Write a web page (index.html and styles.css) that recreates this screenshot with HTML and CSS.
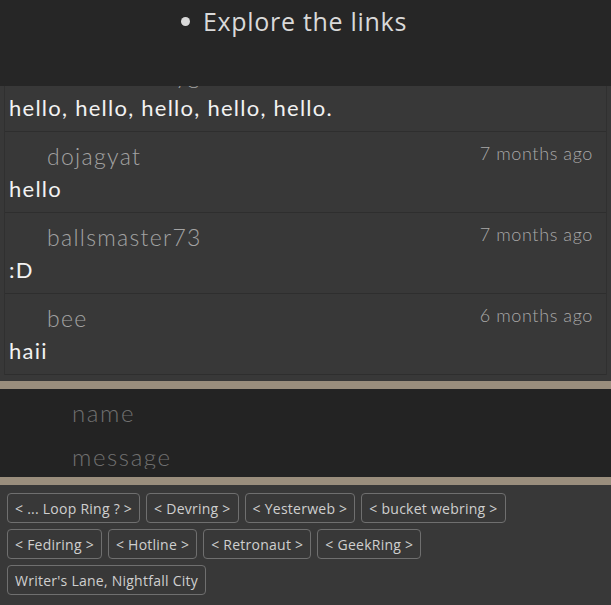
FILE: index.html
```html
<!DOCTYPE html>
<html lang="en">
<head>
<meta charset="utf-8">
<title>Guestbook</title>
<link rel="stylesheet" href="styles.css">
</head>
<body>
<header class="topbar">
  <ul class="nav-list">
    <li class="nav-item">Explore the links</li>
  </ul>
</header>
<main class="page">
  <section class="comments-box">
    <div class="comments-list">
      <article class="comment">
        <div class="comment-head">
          <span class="comment-user">helloworldzyg</span>
          <span class="comment-time">7 months ago</span>
        </div>
        <p class="comment-text">hello, hello, hello, hello, hello.</p>
      </article>
      <article class="comment">
        <div class="comment-head">
          <span class="comment-user">dojagyat</span>
          <span class="comment-time">7 months ago</span>
        </div>
        <p class="comment-text">hello</p>
      </article>
      <article class="comment">
        <div class="comment-head">
          <span class="comment-user">ballsmaster73</span>
          <span class="comment-time">7 months ago</span>
        </div>
        <p class="comment-text">:D</p>
      </article>
      <article class="comment">
        <div class="comment-head">
          <span class="comment-user">bee</span>
          <span class="comment-time">6 months ago</span>
        </div>
        <p class="comment-text">haii</p>
      </article>
    </div>
  </section>
  <form class="comment-form">
    <input class="field" type="text" placeholder="name">
    <input class="field" type="text" placeholder="message">
  </form>
  <footer class="rings">
    <a class="ring">&lt; ... Loop Ring ? &gt;</a>
    <a class="ring">&lt; Devring &gt;</a>
    <a class="ring">&lt; Yesterweb &gt;</a>
    <a class="ring">&lt; bucket webring &gt;</a>
    <a class="ring">&lt; Fediring &gt;</a>
    <a class="ring">&lt; Hotline &gt;</a>
    <a class="ring">&lt; Retronaut &gt;</a>
    <a class="ring">&lt; GeekRing &gt;</a>
    <a class="ring">Writer's Lane, Nightfall City</a>
  </footer>
</main>
</body>
</html>
```
FILE: styles.css
```css
* { box-sizing: border-box; }

html, body {
  margin: 0;
  padding: 0;
  background: #383838;
  overflow: hidden;
}

body {
  font-family: "Open Sans", "Noto Sans", sans-serif;
}

.topbar {
  height: 86px;
  background: #262626;
  position: relative;
  z-index: 2;
}

.nav-list {
  display: flex;
  justify-content: center;
  margin: 0;
  padding: 3px 23px 0 0;
  list-style: none;
}

.nav-item {
  display: flex;
  align-items: center;
  color: #d9d9d9;
  font-family: "Open Sans", sans-serif;
  font-weight: 400;
  font-size: 25px;
  line-height: 36px;
  letter-spacing: 0.7px;
}

.nav-item::before {
  content: "";
  width: 9px;
  height: 9px;
  margin-right: 13px;
  border-radius: 50%;
  background: #d9d9d9;
}

.comments-box {
  height: 295px;
  overflow: hidden;
}

.comments-list {
  margin: -35px 4px 0;
  border-left: 1px solid #303030;
  border-right: 1px solid #303030;
}

.comment {
  padding: 11px 13px 10px 4px;
  border-bottom: 1px solid #2e2e2e;
  font-family: "Lato", sans-serif;
}

.comment-head {
  display: flex;
  justify-content: space-between;
  align-items: flex-start;
}

.comment-user {
  margin-left: 38px;
  font-size: 23px;
  line-height: 26px;
  font-weight: 300;
  letter-spacing: 1.3px;
  color: #a3a3a3;
}

.comment-time {
  font-size: 18px;
  line-height: 22px;
  font-weight: 300;
  letter-spacing: 0.6px;
  color: #a9a9a9;
  margin-top: -1px;
}

.comment-text {
  margin: 7px 0 0;
  font-size: 22px;
  line-height: 26px;
  font-weight: 400;
  letter-spacing: 1.25px;
  color: #f2f2f2;
}

.comment-form {
  display: flex;
  flex-direction: column;
  gap: 18px;
  height: 104px;
  padding: 10px 0 8px;
  background: #232323;
  border-top: 8px solid #9a8e7d;
  border-bottom: 8px solid #9a8e7d;
}

.field {
  display: block;
  width: 100%;
  height: 26px;
  padding: 0 0 0 72px;
  border: none;
  background: transparent;
  outline: none;
  font-family: "Lato", sans-serif;
  font-weight: 300;
  font-size: 24px;
  letter-spacing: 1.6px;
  color: #e0e0e0;
}

.field::placeholder {
  color: #707070;
}

.rings {
  display: flex;
  flex-wrap: wrap;
  gap: 6px;
  padding: 8px 7px;
}

.ring {
  display: inline-flex;
  align-items: center;
  height: 30px;
  padding: 0 7px;
  border: 1px solid #6f6f6f;
  border-radius: 4px;
  font-family: "Open Sans", sans-serif;
  font-size: 14px;
  letter-spacing: 0.25px;
  color: #cfcfcf;
  white-space: nowrap;
}
```
